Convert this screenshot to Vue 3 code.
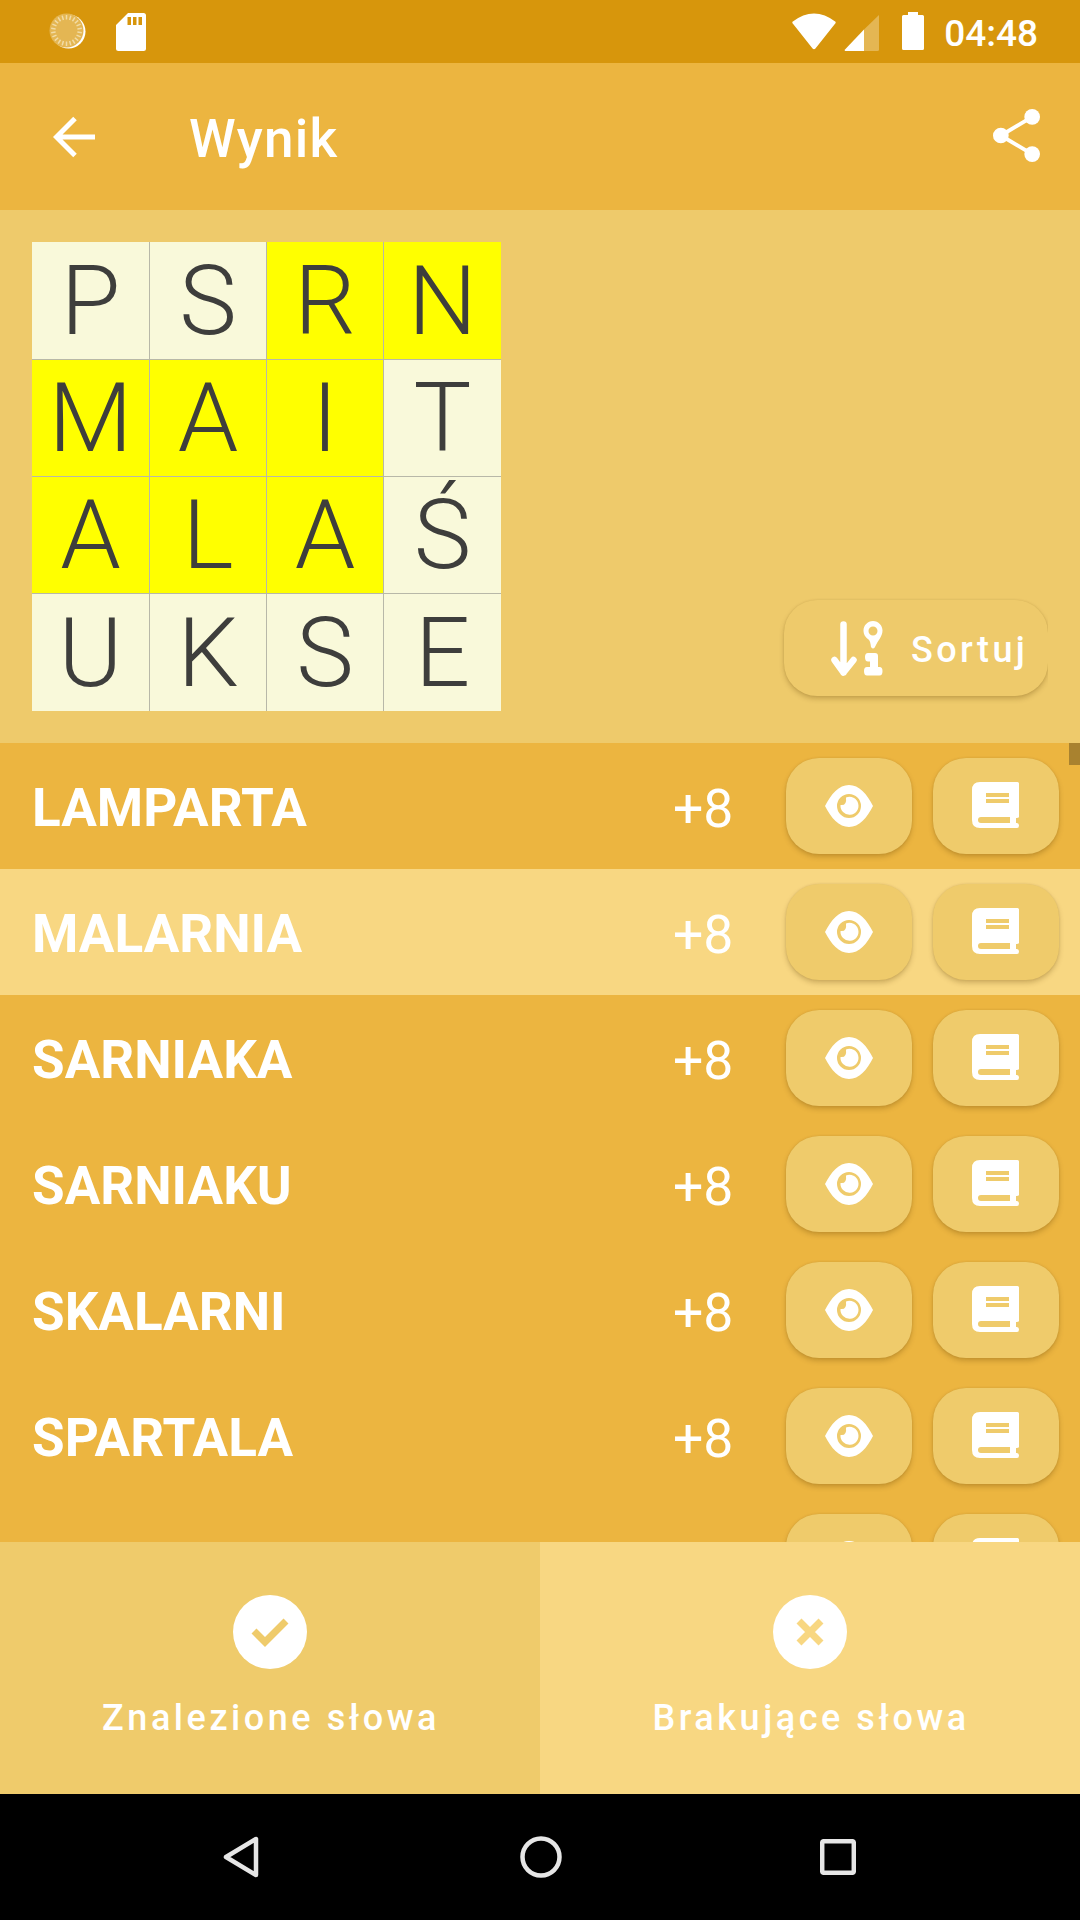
<script setup>
const cells = [
  ['P', 0], ['S', 0], ['R', 1], ['N', 1],
  ['M', 1], ['A', 1], ['I', 1], ['T', 0],
  ['A', 1], ['L', 1], ['A', 1], ['Ś', 0],
  ['U', 0], ['K', 0], ['S', 0], ['E', 0],
]
const rows = [
  { word: 'LAMPARTA', pts: '+8' },
  { word: 'MALARNIA', pts: '+8', active: true },
  { word: 'SARNIAKA', pts: '+8' },
  { word: 'SARNIAKU', pts: '+8' },
  { word: 'SKALARNI', pts: '+8' },
  { word: 'SPARTALA', pts: '+8' },
  { word: '', pts: '' },
]
const ticks = Array.from({ length: 22 }, (_, i) => (i * 360) / 22)
</script>

<template>
  <div class="screen">
    <header class="status">
      <div class="status-left">
        <svg width="42" height="42" viewBox="0 0 42 42">
          <circle cx="20.5" cy="19.5" r="17" fill="#fff" />
          <circle cx="18.5" cy="18.5" r="17" fill="#e4b653" />
          <g stroke="#f2dca6" stroke-width="1.5">
            <line v-for="t in ticks" :key="t" x1="18.5" y1="3" x2="18.5" y2="7.500" :transform="`rotate(${t} 18.5 18.5)`" />
          </g>
        </svg>
        <svg width="30" height="38" viewBox="0 0 30 38">
          <path fill="#fff" d="M12 0H27.500Q30 0 30 2.500V35.500Q30 38 27.500 38H2.500Q0 38 0 35.500V12ZM11.500 4V12H15V4ZM17 4V12H20.500V4ZM22.500 4V12H26V4Z" fill-rule="evenodd" />
        </svg>
      </div>
      <div class="status-right">
        <svg class="wifi" width="44" height="37" viewBox="0 0 46 38" preserveAspectRatio="none">
          <path fill="#fff" d="M0.500 9Q23 -8 45.500 9Q46 10 45 11L24.500 36.500Q23 38 21.500 36.500L1 11Q0 10 0.500 9Z" />
        </svg>
        <svg class="signal" width="35" height="36" viewBox="0 0 35 36">
          <path fill="#e4b653" d="M20 14.500L35 0V34.500Q35 36 33.500 36H20Z" />
          <path fill="#fff" d="M20 14.500V36H1.500Q0 36 1 34.500Z" />
        </svg>
        <svg class="battery" width="22" height="38" viewBox="0 0 22 38">
          <path fill="#fff" d="M6 0H16V3H20.500Q22 3 22 4.500V36.500Q22 38 20.500 38H1.500Q0 38 0 36.500V4.500Q0 3 1.500 3H6Z" />
        </svg>
        <span class="clock">04:48</span>
      </div>
    </header>

    <div class="appbar">
      <svg class="back" width="42" height="42" viewBox="0 0 42 42">
        <path fill="none" stroke="#fff" stroke-width="5" d="M42 21H4M22 2.500L3.500 21L22 39.500" />
      </svg>
      <h1 class="title">Wynik</h1>
      <svg class="share" width="47" height="53" viewBox="0 0 48 54">
        <g fill="#fff">
          <circle cx="40" cy="8" r="8" />
          <circle cx="40" cy="46" r="8" />
          <circle cx="8" cy="27" r="8" />
        </g>
        <path fill="none" stroke="#fff" stroke-width="4" d="M40 8L8 27L40 46" />
      </svg>
    </div>

    <section class="panel">
      <div class="grid">
        <div v-for="(c, i) in cells" :key="i" class="cell" :class="{ hit: c[1] }">{{ c[0] }}</div>
      </div>
      <button class="sort">
        <svg width="52" height="55" viewBox="0 0 52 55">
          <path fill="none" stroke="#fff" stroke-width="6.500" stroke-linecap="round" stroke-linejoin="round" d="M12.500 3.500V51.500M3.500 39L12.500 51.500L22.500 39" />
          <path fill="#fff" fill-rule="evenodd" d="M42 0C36.500 0 32.500 4.500 32.500 9.500C32.500 14 35 16.500 37 18C39 19.500 39.500 22 40 26Q42.500 29.500 44.500 25C46.500 20 51.500 15.500 51.500 9.500C51.500 4.500 47.500 0 42 0ZM42 5.500A4.500 4.500 0 1 1 42 14.500A4.500 4.500 0 1 1 42 5.500Z" />
          <path fill="#fff" d="M37 32H44Q47 32 47 35V46H48.500Q51.500 46 51.500 50Q51.500 54.500 48.500 54.500H36Q33 54.500 33 50Q33 46 36 46H39V40.500H37Q34 40.500 34 36Q34 32 37 32Z" />
        </svg>
        <span class="sort-label">Sortuj</span>
      </button>
    </section>

    <div class="list">
      <div v-for="(r, i) in rows" :key="i" class="row" :class="{ active: r.active }">
        <span class="word">{{ r.word }}</span>
        <span class="pts">{{ r.pts }}</span>
        <div class="act">
          <svg class="eye" width="48" height="42" viewBox="0 0 48 42">
            <path fill="#fff" fill-rule="evenodd" d="M0 21C6 9 14 0 24 0S42 9 48 21C42 33 34 42 24 42S6 33 0 21ZM24 9A12 12 0 1 0 24 33A12 12 0 1 0 24 9Z" />
            <path fill="#fff" d="M21 12.500A9 9 0 1 1 15.500 20Q22 21 21 12.500Z" />
          </svg>
        </div>
        <div class="act">
          <svg class="book" width="47" height="46" viewBox="0 0 47 46">
            <path fill="#fff" fill-rule="evenodd" d="M8 0H45.500Q47 0 47 1.500V35Q47 36 44 36V41H45Q47 41 47 43.500Q47 46 45 46H8Q0 46 0 38V8Q0 0 8 0ZM14 11V15H37V11ZM14 17V21H37V17ZM9 35Q6 35 6 38Q6 41 9 41H38V35Z" />
          </svg>
        </div>
      </div>
      <i class="scroll-thumb"></i>
    </div>

    <footer class="tabs">
      <div class="tab found">
        <span class="disc">
          <svg width="38" height="30" viewBox="0 0 38 30">
            <path fill="none" stroke="#efcb6b" stroke-width="7" d="M3 14L14 25L35 4" />
          </svg>
        </span>
        <span class="tab-label">Znalezione słowa</span>
      </div>
      <div class="tab missing">
        <span class="disc">
          <svg width="28" height="28" viewBox="0 0 28 28">
            <path fill="none" stroke="#f8d782" stroke-width="7" d="M3 3L25 25M25 3L3 25" />
          </svg>
        </span>
        <span class="tab-label">Brakujące słowa</span>
      </div>
    </footer>

    <nav class="navbar">
      <svg width="36" height="42" viewBox="0 0 36 42">
        <path fill="none" stroke="#e6e6e6" stroke-width="4.500" stroke-linejoin="round" d="M33 3V39L3 21Z" />
      </svg>
      <svg width="42" height="42" viewBox="0 0 42 42">
        <circle cx="21" cy="21" r="18.500" fill="none" stroke="#e6e6e6" stroke-width="4.500" />
      </svg>
      <svg width="36" height="36" viewBox="0 0 36 36">
        <rect x="2.200" y="2.200" width="31.600" height="31.600" rx="1.500" fill="none" stroke="#e6e6e6" stroke-width="4.500" />
      </svg>
    </nav>
  </div>
</template>

<style>
html, body { margin: 0; padding: 0; }
</style>

<style scoped>
.screen {
  width: 1080px;
  height: 1920px;
  display: flex;
  flex-direction: column;
  overflow: hidden;
  font-family: Roboto, "Noto Sans", sans-serif;
  background: #ecb540;
}
.status {
  height: 63px;
  flex: none;
  background: #d7960c;
  display: flex;
  align-items: flex-start;
  justify-content: space-between;
}
.status-left {
  display: flex;
  align-items: flex-start;
  gap: 26px;
  padding: 12px 0 0 48px;
}
.status-left svg:nth-child(2) { margin-top: 1px; }
.status-right {
  display: flex;
  align-items: flex-start;
  padding: 12px 42px 0 0;
}
.wifi { margin-top: 1px; }
.signal { margin: 3px 0 0 8px; }
.battery { margin-left: 23px; }
.clock {
  color: #fff;
  font-size: 37px;
  font-weight: 500;
  margin: -1px 0 0 20px;
  line-height: 45px;
}
.appbar {
  height: 147px;
  flex: none;
  display: flex;
  align-items: center;
  background: #ecb540;
}
.back { margin-left: 53px; }
.title {
  margin: 4px 0 0 94px;
  color: #fff;
  font-size: 53px;
  font-weight: 500;
  letter-spacing: 1.2px;
}
.share { margin-left: auto; margin-right: 40px; margin-bottom: 2px; }
.panel {
  height: 533px;
  flex: none;
  box-sizing: border-box;
  padding: 32px 32px 32px 32px;
  background: #eeca6b;
  display: flex;
  justify-content: space-between;
  align-items: flex-end;
}
.grid {
  width: 469px;
  height: 469px;
  display: grid;
  grid-template-columns: 117px 116px 116px 117px;
  grid-template-rows: 117px 116px 116px 117px;
  background: #b8b8a8;
  gap: 1px;
}
.cell {
  background: #f9f9da;
  color: #3e3e3c;
  font-size: 97px;
  font-weight: 300;
  display: flex;
  align-items: center;
  justify-content: center;
}
.cell.hit { background: #ffff00; }
.sort {
  width: 264px;
  height: 96px;
  margin-bottom: 15px;
  padding: 0 0 0 47px;
  border: 0;
  border-radius: 33px;
  background: #eeca6b;
  color: #fff;
  font-family: inherit;
  font-size: 36px;
  font-weight: 500;
  letter-spacing: 3.4px;
  display: flex;
  align-items: center;
  gap: 28px;
  box-shadow: 0 3px 5px rgba(90, 60, 0, 0.25), 0 0 2px rgba(90, 60, 0, 0.15);
  clip-path: inset(-10px 0 -10px -10px);
}
.sort-label { margin-top: 3px; }
.list {
  flex: 1;
  min-height: 0;
  overflow: hidden;
  position: relative;
}
.row {
  height: 126px;
  flex: none;
  box-sizing: border-box;
  padding: 0 21px 0 32px;
  display: flex;
  align-items: center;
  gap: 21px;
  color: #fff;
}
.row.active { background: #f8d782; }
.word {
  flex: 1;
  margin-top: 4px;
  font-size: 53px;
  font-weight: 700;
}
.pts {
  width: 59px;
  margin: 4px 33px 0 0;
  font-size: 53.5px;
  font-weight: 400;
  white-space: nowrap;
}
.act {
  width: 126px;
  height: 96px;
  flex: none;
  border-radius: 33px;
  background: #efcb6b;
  display: flex;
  align-items: center;
  justify-content: center;
  box-shadow: 0 3px 5px rgba(90, 60, 0, 0.25), 0 0 2px rgba(90, 60, 0, 0.15);
}
.eye { margin: 0 1px 1px 0; }
.book { margin: 0 1px 2px 0; }
.scroll-thumb {
  position: absolute;
  top: 0;
  right: 0;
  width: 11px;
  height: 22px;
  background: #a9822f;
}
.tabs {
  height: 252px;
  flex: none;
  display: flex;
}
.tab {
  flex: 1;
  box-sizing: border-box;
  padding-top: 53px;
  display: flex;
  flex-direction: column;
  align-items: center;
  color: #fff;
}
.found { background: #efcb6b; }
.missing { background: #f8d782; }
.disc {
  width: 74px;
  height: 74px;
  border-radius: 50%;
  background: #fff;
  display: flex;
  align-items: center;
  justify-content: center;
}
.tab-label {
  margin-top: 27px;
  padding-left: 2px;
  font-size: 36px;
  font-weight: 500;
  letter-spacing: 3.55px;
  line-height: 44px;
}
.navbar {
  height: 126px;
  flex: none;
  background: #000;
  display: flex;
  align-items: center;
  padding-left: 223px;
}
.navbar svg:nth-child(2) { margin-left: 261px; }
.navbar svg:nth-child(3) { margin-left: 258px; }
</style>
